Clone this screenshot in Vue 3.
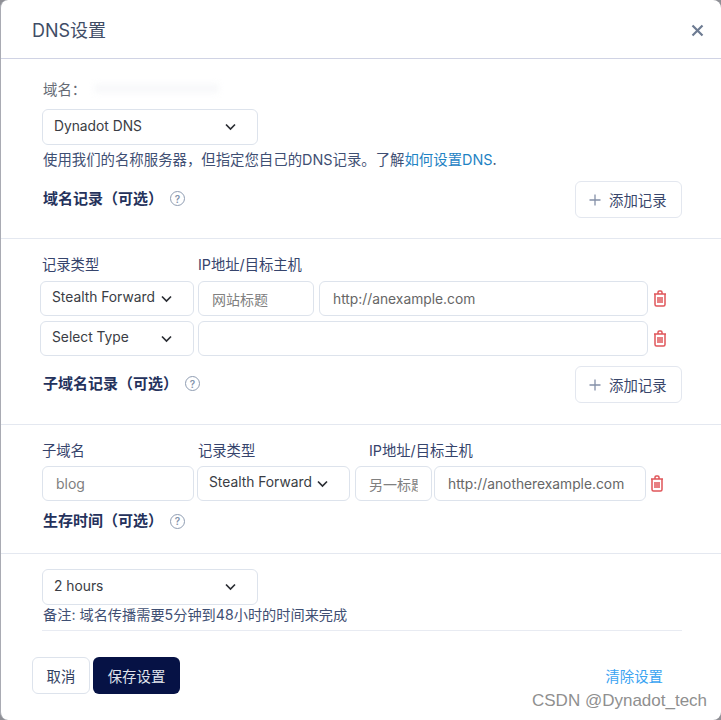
<script setup>
const chevron = 'M1 1.5 L5.5 6 L10 1.5'
</script>

<template>
  <div class="modal">
    <header class="head">
      <h1 class="title">DNS设置</h1>
      <svg class="close" width="13" height="13" viewBox="0 0 13 13"><path d="M1.5 1.5 L11.5 11.5 M11.5 1.5 L1.5 11.5" /></svg>
    </header>

    <section class="sec sec-domain">
      <div class="domain"><span>域名：</span><i class="smudge"></i></div>
      <div class="field select wide">
        <span>Dynadot DNS</span>
        <svg class="chev" width="11" height="8" viewBox="0 0 11 8"><path :d="chevron" /></svg>
      </div>
      <p class="desc">使用我们的名称服务器，但指定您自己的DNS记录。了解<a class="link">如何设置DNS</a>.</p>
      <div class="sechead">
        <div class="heading"><span>域名记录（可选）</span><span class="help">?</span></div>
        <button class="add">
          <svg width="12" height="12" viewBox="0 0 12 12"><path d="M6 0.5 V11.5 M0.5 6 H11.5" /></svg>
          <span>添加记录</span>
        </button>
      </div>
    </section>

    <section class="sec sec-records">
      <div class="labels">
        <span class="l1">记录类型</span>
        <span>IP地址/目标主机</span>
      </div>
      <div class="row first">
        <div class="field select s-type">
          <span>Stealth Forward</span>
          <svg class="chev" width="11" height="8" viewBox="0 0 11 8"><path :d="chevron" /></svg>
        </div>
        <div class="field input ph w116">网站标题</div>
        <div class="field input url w329">http://anexample.com</div>
        <svg class="trash" width="14" height="17" viewBox="0 0 14 17"><path d="M1 4 H13 M5 4 V2.2 Q5 1 6.2 1 H7.8 Q9 1 9 2.2 V4 M2 4 V14.5 Q2 16 3.5 16 H10.5 Q12 16 12 14.5 V4 M5 7 V13 M7 7 V13 M9 7 V13" /></svg>
      </div>
      <div class="row second">
        <div class="field select s-type">
          <span>Select Type</span>
          <svg class="chev" width="11" height="8" viewBox="0 0 11 8"><path :d="chevron" /></svg>
        </div>
        <div class="field input w450"></div>
        <svg class="trash" width="14" height="17" viewBox="0 0 14 17"><path d="M1 4 H13 M5 4 V2.2 Q5 1 6.2 1 H7.8 Q9 1 9 2.2 V4 M2 4 V14.5 Q2 16 3.5 16 H10.5 Q12 16 12 14.5 V4 M5 7 V13 M7 7 V13 M9 7 V13" /></svg>
      </div>
      <div class="sechead">
        <div class="heading"><span>子域名记录（可选）</span><span class="help">?</span></div>
        <button class="add">
          <svg width="12" height="12" viewBox="0 0 12 12"><path d="M6 0.5 V11.5 M0.5 6 H11.5" /></svg>
          <span>添加记录</span>
        </button>
      </div>
    </section>

    <section class="sec sec-sub">
      <div class="labels">
        <span class="l1">子域名</span>
        <span class="l2">记录类型</span>
        <span>IP地址/目标主机</span>
      </div>
      <div class="row sub">
        <div class="field input ph w152">blog</div>
        <div class="field select s-type2">
          <span>Stealth Forward</span>
          <svg class="chev" width="11" height="8" viewBox="0 0 11 8"><path :d="chevron" /></svg>
        </div>
        <div class="field input ph w77"><span class="clip">另一标题</span></div>
        <div class="field input url w212">http://anotherexample.com</div>
        <svg class="trash" width="14" height="17" viewBox="0 0 14 17"><path d="M1 4 H13 M5 4 V2.2 Q5 1 6.2 1 H7.8 Q9 1 9 2.2 V4 M2 4 V14.5 Q2 16 3.5 16 H10.5 Q12 16 12 14.5 V4 M5 7 V13 M7 7 V13 M9 7 V13" /></svg>
      </div>
      <div class="heading solo"><span>生存时间（可选）</span><span class="help">?</span></div>
    </section>

    <section class="sec sec-ttl">
      <div class="field select wide">
        <span>2 hours</span>
        <svg class="chev" width="11" height="8" viewBox="0 0 11 8"><path :d="chevron" /></svg>
      </div>
      <p class="note">备注: 域名传播需要5分钟到48小时的时间来完成</p>
    </section>

    <footer class="foot">
      <div class="actions">
        <button class="btn ghost">取消</button>
        <button class="btn primary">保存设置</button>
      </div>
      <a class="clear">清除设置</a>
    </footer>

    <div class="mark">CSDN @Dynadot_tech</div>
  </div>
</template>

<style scoped>
.modal {
  position: relative;
  box-sizing: border-box;
  width: 721px;
  height: 720px;
  overflow: hidden;
  background: #fff;
  border-left: 1px solid #a9abb3;
  border-radius: 8px;
  font-family: Inter, "Noto Sans CJK SC", sans-serif;
  font-size: 14px;
  color: #33415f;
}
.head {
  display: flex;
  align-items: center;
  justify-content: space-between;
  box-sizing: border-box;
  height: 59px;
  padding: 0 17px 0 31px;
  border-bottom: 1px solid #d0d3e4;
}
.title {
  margin: 0;
  font-size: 18px;
  font-weight: 400;
  color: #3f4d66;
}
.close { margin-top: 2px; }
.close path { fill: none; stroke: #6d7b92; stroke-width: 2.2; }

.sec { border-bottom: 1px solid #e4e8f0; }
.sec-domain { padding: 19px 39px 20px 41px; }
.sec-records { padding: 16px 39px 21px 41px; }
.sec-sub { padding: 16px 39px 22px 41px; }
.sec-ttl { margin: 0 39px 0 41px; padding: 15px 0 0; border-bottom: 1px solid #e8ebf2; height: 61px; }

.domain {
  display: flex;
  align-items: center;
  height: 20px;
  padding-left: 1px;
  font-size: 14.4px;
  color: #666b75;
}
.smudge {
  display: block;
  width: 125px;
  height: 9px;
  margin-left: 8px;
  background: #f3f4f7;
  filter: blur(3px);
  opacity: 0.6;
}

.field {
  box-sizing: border-box;
  height: 35px;
  background: #fff;
  border: 1px solid #dde3ec;
  border-radius: 6px;
  display: flex;
  align-items: center;
  flex: none;
}
.select {
  justify-content: space-between;
  color: #3a3d44;
  font-size: 13.8px;
  padding: 0 21px 0 11px;
}
.select span { margin-top: -3px; }
.wide {
  width: 216px;
  height: 36px;
  margin-top: 11px;
}
.chev { flex: none; }
.chev path { fill: none; stroke: #2a2d33; stroke-width: 1.7; }

.desc {
  margin: 4px 0 0;
  height: 22px;
  padding-left: 1px;
  font-size: 14.4px;
  line-height: 22px;
  color: #3f4f73;
  white-space: nowrap;
}
.link { color: #1f83c4; }

.sechead {
  display: flex;
  align-items: center;
  justify-content: space-between;
  margin-top: 10px;
}
.sechead .heading { margin-top: -2px; }
.heading {
  display: flex;
  align-items: center;
  gap: 7px;
  padding-left: 1px;
  font-size: 15px;
  font-weight: 600;
  color: #25325c;
  line-height: 20px;
}
.solo { margin-top: 10px; }
.help {
  box-sizing: border-box;
  display: flex;
  align-items: center;
  justify-content: center;
  width: 15px;
  height: 15px;
  border: 1.5px solid #8f9db2;
  border-radius: 50%;
  font-size: 10px;
  font-weight: 600;
  color: #8394ab;
}
.add {
  box-sizing: border-box;
  display: flex;
  align-items: center;
  gap: 8px;
  width: 107px;
  height: 37px;
  padding: 0 13px;
  background: #fff;
  border: 1.5px solid #e3e7ef;
  border-radius: 6px;
  font: inherit;
  font-size: 14.4px;
  color: #39466b;
  white-space: nowrap;
}
.add svg { flex: none; }
.add path { fill: none; stroke: #8490a8; stroke-width: 1.3; }

.labels {
  display: flex;
  font-size: 14.3px;
  line-height: 20px;
  color: #36446c;
}
.l1 { width: 156px; }
.l2 { width: 171px; }

.row { display: flex; align-items: center; }
.first { margin: 6px 0 0 -2px; }
.second { margin: 5px 0 0 -2px; }
.sub { margin: 5px 0 0; }

.s-type { width: 154px; margin-right: 4px; }
.s-type2 { width: 153px; margin: 0 5px 0 3px; }
.input { padding: 0 13px; }
.url { color: #666; font-size: 13.8px; }
.ph { color: #808080; }
.w116 { width: 116px; margin-right: 5px; }
.w329 { width: 329px; }
.w450 { width: 450px; }
.w152 { width: 152px; }
.w77 { width: 77px; margin-right: 2px; }
.w212 { width: 212px; }
.clip { display: block; overflow: hidden; white-space: nowrap; width: 51px; }
.trash { margin-left: 5px; flex: none; }
.sub .trash { margin-left: 4px; }
.trash path { fill: none; stroke: #e0565a; stroke-width: 1.5; }

.note {
  margin: 0;
  font-size: 14.2px;
  line-height: 20px;
  padding-left: 1px;
  color: #3f4f73;
  white-space: nowrap;
}
.sec-ttl .wide { margin-top: 0; }

.foot {
  display: flex;
  align-items: center;
  justify-content: space-between;
  padding: 26px 58px 0 31px;
}
.actions { display: flex; gap: 3px; }
.btn {
  box-sizing: border-box;
  height: 37px;
  border-radius: 6px;
  font: inherit;
  font-size: 14.4px;
  padding: 0;
}
.ghost { width: 58px; background: #fff; border: 1px solid #dde3ec; color: #33415f; }
.primary { width: 87px; background: #061245; border: 0; color: #dfe2ea; }
.clear { color: #3ba4f2; font-size: 14.4px; }

.mark {
  position: absolute;
  left: 531px;
  top: 692px;
  font-family: "Liberation Sans", sans-serif;
  font-size: 17px;
  line-height: 18px;
  color: #8f8f8f;
  white-space: nowrap;
}
</style>

<style>
html, body { margin: 0; background: #8f9096; }
</style>
